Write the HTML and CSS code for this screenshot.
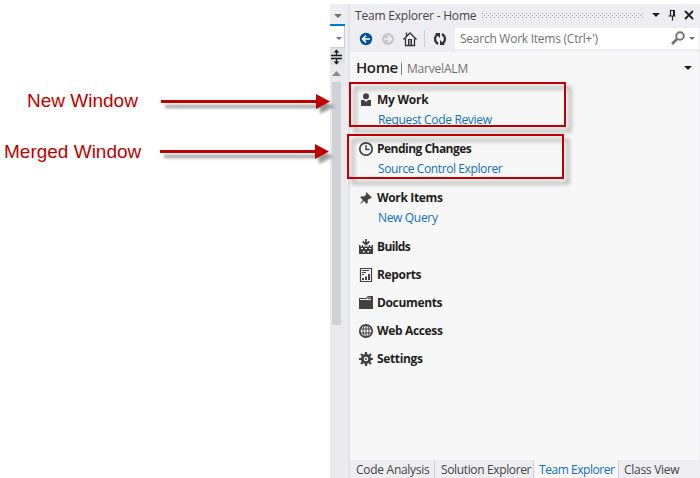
FILE: index.html
```html
<!DOCTYPE html>
<html lang="en">
<head>
<meta charset="utf-8">
<title>Team Explorer - Home</title>
<link rel="stylesheet" href="styles.css">
</head>
<body>
<div class="app">
  <aside class="notes"></aside>
  <div class="editor-edge">
    <div class="edge-tab"><svg width="15" height="20"><path d="M4 10h8l-4 4z" fill="#717171"/></svg></div>
    <div class="edge-combo"><svg width="15" height="20"><path d="M6 11h6l-3 3z" fill="#717171"/></svg></div>
    <div class="edge-split"><svg width="15" height="17"><path d="M1 7.500h11M1 10.500h11M6.500 3v4M6.500 11v4" stroke="#1e1e1e" stroke-width="1.4"/><path d="M3.500 4.500 6.500 1.500 9.500 4.500zM3.500 13.500 6.500 16.500 9.500 13.500z" fill="#1e1e1e"/></svg></div>
    <div class="edge-up"><svg width="15" height="17"><path d="M2 11h9L6.500 6z" fill="#868999"/></svg></div>
    <div class="edge-track"><div class="edge-thumb"></div></div>
  </div>
  <div class="gutter"></div>
  <main class="panel">
    <header class="title-bar">
      <span class="title">Team Explorer - Home</span>
      <svg class="grip" width="162" height="5"><defs><pattern id="dots" width="4" height="4" patternUnits="userSpaceOnUse"><path d="M0 0h1v1H0zM2 2h1v1H2z" fill="#999ba3"/></pattern></defs><rect width="162" height="5" fill="url(#dots)"/></svg>
      <svg class="window-buttons" width="56" height="22"><path d="M8 9h8l-4 4z" fill="#1e1e1e"/><path d="M26.500 6v6M26 6.500h4.500M24.500 12h7M28.500 12v4.500" fill="none" stroke="#1e1e1e" stroke-width="1.200"/><path d="M30 6v6" stroke="#1e1e1e" stroke-width="2"/><path d="M41 7l8 8M49 7l-8 8" stroke="#1e1e1e" stroke-width="1.800"/></svg>
    </header>
    <div class="toolbar">
      <svg class="tools" width="105" height="24">
        <circle cx="16" cy="13" r="6.200" fill="#00539c"/><path d="M20 13h-7M16 9.700 12.700 13l3.300 3.300" fill="none" stroke="#fff" stroke-width="1.700"/>
        <circle cx="38" cy="13" r="6" fill="#c6c6cb"/><path d="M34 13h7M38 9.700l3.300 3.300-3.300 3.300" fill="none" stroke="#f0f0f5" stroke-width="1.700"/>
        <path d="M53.500 13.500l6.500-6.500 6.500 6.500M55.500 12.500V19.500h9v-7M56.500 10V6.500" fill="none" stroke="#333" stroke-width="1.300"/><path d="M58 19v-6h4v6z" fill="#333"/><path d="M59.500 14h1v5h-1z" fill="#eeeef2"/>
        <path d="M74.500 4v17" stroke="#cccedb"/>
        <path d="M88 18q-3-2-3-5 0-3 3-5M92 8q3 2 3 5 0 3-3 5" fill="none" stroke="#333" stroke-width="2.200"/><path d="M85 7h5v5zM95 19h-5v-5z" fill="#333"/>
      </svg>
      <div class="search"><span class="search-text">Search Work Items (Ctrl+')</span>
        <svg width="34" height="22"><circle cx="15" cy="8" r="3.800" fill="none" stroke="#717171" stroke-width="1.900"/><path d="M12 11l-5 5" stroke="#717171" stroke-width="2.600"/><path d="M24 9h6l-3 3z" fill="#717171"/></svg>
      </div>
    </div>
    <section class="page">
      <div class="page-head"><span class="home">Home</span><span class="bar"></span><span class="project">MarvelALM</span><svg class="drop" width="10" height="6"><path d="M1 1h8L5 5z" fill="#1e1e1e"/></svg></div>
      <nav class="groups">
        <div class="group"><div class="head"><svg width="16" height="16"><circle cx="8" cy="4.200" r="3" fill="#424242"/><path d="M3 8h3l2 2 2-2h3v6H3z" fill="#424242"/></svg><b class="my">My Work</b></div><a class="request">Request Code Review</a></div>
        <div class="group"><div class="head"><svg width="16" height="16"><circle cx="8" cy="8" r="6.200" fill="none" stroke="#424242" stroke-width="1.700"/><path d="M8 4v4.500h3.500" fill="none" stroke="#424242" stroke-width="1.400"/></svg><b class="pending">Pending Changes</b></div><a class="source">Source Control Explorer</a></div>
        <div class="group"><div class="head"><svg width="16" height="16"><path d="M8.500 2.500l5 5-1 1-1-.3-2.200 2 .3 2.500-1 .7L6 10.800 2.500 13.500 5.200 10 2.700 7.500l.8-1 2.500.3 2.700-2.600-.7-1z" fill="#424242" stroke="#424242" stroke-width=".5"/></svg><b class="work">Work Items</b></div><a class="query">New Query</a></div>
        <div class="group"><div class="head"><svg width="16" height="16"><path d="M8 0v5M4.700 2.500 8 5.500l3.300-3" fill="none" stroke="#424242" stroke-width="1.700"/><path d="M1 15V6h1.500v1.500H4V6h1v1.500h6V6h1v1.500h1.500V6H15v9z" fill="#424242"/><path d="M3 9h2v1H3zM7 9h2v1H7zM11 9h2v1h-2zM5 12h1.500v1.500H5zM9.500 12H11v1.500H9.500z" fill="#f7f7f7"/></svg><b class="builds">Builds</b></div></div>
        <div class="group"><div class="head"><svg width="16" height="16"><path d="M2.500 1.500h11v13h-11z" fill="none" stroke="#424242" stroke-width="1.200"/><path d="M4 3.500h7M4 5.500h4M4 7.500h2" stroke="#424242"/><path d="M4 11h2v2H4zM7 9.500h2V13H7zM10 7h2v6h-2z" fill="#424242"/></svg><b class="reports">Reports</b></div></div>
        <div class="group"><div class="head"><svg width="16" height="16"><path d="M1 14V3h7l2-2h5v13z" fill="#424242"/><path d="M2 4h6.500l1.500-1.500h3V5H2z" fill="#f7f7f7"/><path d="M10 3.500h3" stroke="#424242"/></svg><b class="documents">Documents</b></div></div>
        <div class="group"><div class="head"><svg width="16" height="16"><g fill="none" stroke="#424242"><circle cx="8" cy="8" r="6.200" stroke-width="1.700"/><ellipse cx="8" cy="8" rx="3" ry="6"/><path d="M8 2v12M2 6h12M2 10h12"/></g></svg><b class="web">Web Access</b></div></div>
        <div class="group"><div class="head"><svg width="16" height="16"><circle cx="8" cy="8" r="3.700" fill="none" stroke="#424242" stroke-width="2.800"/><path d="M8 1v3M8 12v3M1 8h3M12 8h3M3 3l2 2M11 11l2 2M13 3l-2 2M5 11l-2 2" stroke="#424242" stroke-width="2.200"/><circle cx="8" cy="8" r="1" fill="#424242"/></svg><b class="settings">Settings</b></div></div>
      </nav>
    </section>
    <footer class="tabs"><span class="tab analysis">Code Analysis</span><span class="tab solution">Solution Explorer</span><span class="tab active">Team Explorer</span><span class="tab classview">Class View</span></footer>
  </main>
</div>
<div class="callout-label first">New Window</div>
<div class="callout-label second">Merged Window</div>
<svg class="arrow arrow-first" width="171" height="18"><path d="M1 7h155V1l14 7.500L156 16v-6H1z" fill="#c00000"/></svg>
<svg class="arrow arrow-second" width="171" height="18"><path d="M1 7h155V1l14 7.500L156 16v-6H1z" fill="#c00000"/></svg>
<div class="outline outline-first"></div>
<div class="outline outline-second"></div>
</body>
</html>
```
FILE: styles.css
```css
* { box-sizing: border-box; }
body { margin: 0; background: #fff; font: 12px "Open Sans", sans-serif; color: #444; overflow: hidden; }
svg { display: block; flex: none; }
.app { display: flex; width: 700px; height: 478px; padding-top: 4px; }
.notes { width: 330px; flex: none; }
.editor-edge { width: 15px; display: flex; flex-direction: column; background: #eaeaed; }
.edge-tab { height: 22px; background: #eeeef2; border-bottom: 2px solid #007acc; }
.edge-combo { height: 21px; background: #fff; border-right: 1px solid #cccedb; }
.edge-split { height: 18px; background: #e1e2e7; border-top: 1px solid #cccedb; }
.edge-up { height: 17px; }
.edge-track { flex: 1; padding: 0 4px 0 2px; }
.edge-thumb { height: 243px; background: #d0d1d5; }
.gutter { width: 5px; flex: none; background: #eeeef2; border-right: 2px solid #e2e3ea; }
.panel { width: 350px; display: flex; flex-direction: column; background: #eeeef2; }
.title-bar { height: 23px; flex: none; display: flex; padding-left: 5px; white-space: nowrap; }
.title { width: 127px; line-height: 23px; letter-spacing: -.2px; }
.grip { margin-top: 9px; }
.toolbar { height: 25px; flex: none; display: flex; }
.tools { margin-top: -1px; }
.search { flex: 1; height: 21px; margin: 1px 1px 0 0; background: #fff; display: flex; justify-content: space-between; color: #717171; padding-left: 5px; }
.search-text { line-height: 21px; white-space: nowrap; letter-spacing: -.25px; }
.page { flex: 1; margin-right: 1px; background: #f7f7f7; }
.page-head { height: 32px; display: flex; align-items: center; padding: 0 6px; }
.home { width: 43px; font-size: 15px; font-weight: 600; letter-spacing: -.4px; color: #1e1e1e; margin-top: -2px; }
.bar { width: 1px; height: 12px; background: #777; margin: 1px 5px 0 2px; }
.project { font-size: 12px; letter-spacing: -.2px; color: #717171; }
.drop { margin-left: auto; }
.groups { padding: 6px 8px; display: flex; flex-direction: column; gap: 8px; }
.head { height: 20px; display: flex; align-items: center; gap: 3px; color: #1e1e1e; white-space: nowrap; }
.head b { font-weight: 700; margin-top: -1px; letter-spacing: -.35px; }
.head .pending { letter-spacing: -.52px; }
.head .builds { letter-spacing: -.6px; }
.head .my { letter-spacing: -.25px; }
.group a { display: block; height: 21px; line-height: 19px; padding-left: 20px; color: #0e70c0; white-space: nowrap; letter-spacing: -.33px; }
.group .source { letter-spacing: -.4px; }
.tabs { height: 18px; flex: none; display: flex; white-space: nowrap; line-height: 19px; }
.tab { flex: none; border-right: 1px solid #cccedb; padding-left: 6px; letter-spacing: -.28px; }
.analysis { width: 85px; }
.solution { width: 99px; letter-spacing: -.36px; }
.active { width: 85px; padding-left: 5px; background: #f7f7f7; color: #0e70c0; letter-spacing: -.45px; }
.classview { border: 0; padding-left: 5px; }
.callout-label { position: absolute; font: 19px/20px "Liberation Sans", sans-serif; color: #c00000; white-space: nowrap; }
.callout-label.first { left: 27px; top: 91px; }
.callout-label.second { left: 4px; top: 142px; }
.arrow { position: absolute; overflow: visible; filter: drop-shadow(4px 5px 1.5px rgba(0,0,0,.4)); }
.arrow-first { left: 160px; top: 93px; }
.arrow-second { left: 159px; top: 143px; }
.outline { position: absolute; width: 217px; height: 45px; border: 2px solid #c00000; filter: drop-shadow(5px 5px 2px rgba(0,0,0,.4)); }
.outline-first { left: 349px; top: 82px; }
.outline-second { left: 347px; top: 134px; }
```
